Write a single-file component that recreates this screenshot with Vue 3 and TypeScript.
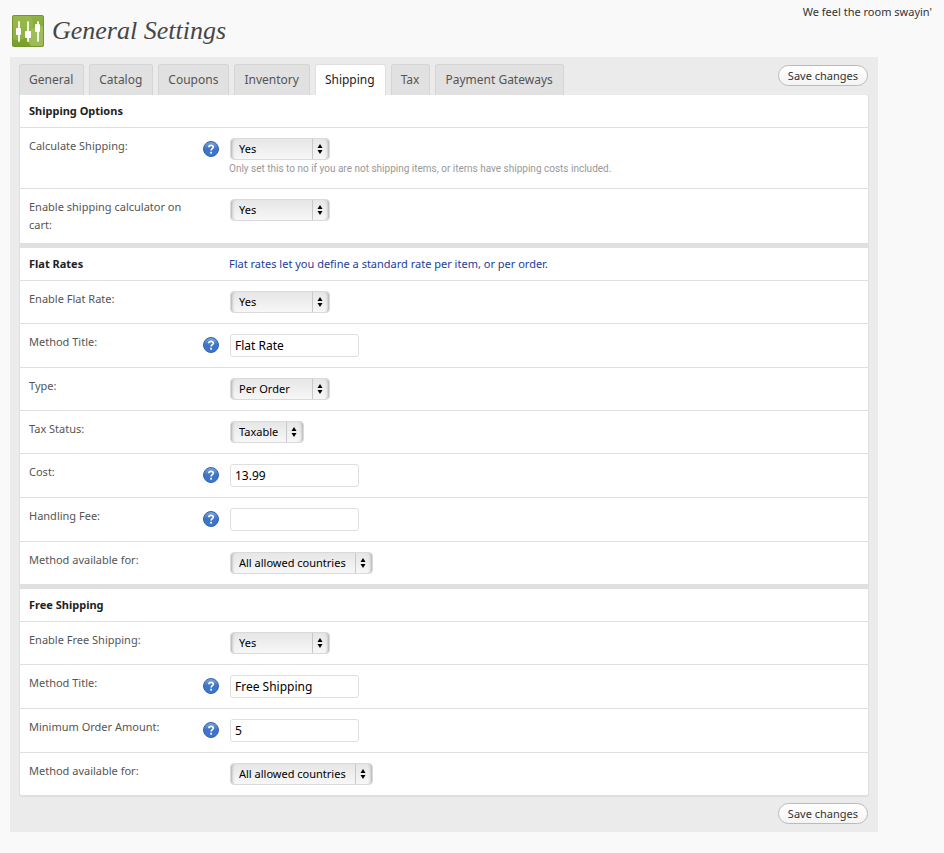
<script setup lang="ts">
import { reactive, ref } from 'vue'

interface Field {
  id: string
  label: string
  kind: 'select' | 'text'
  value: string
  options?: string[]
  size?: 'small' | 'medium' | 'large'
  help?: boolean
  note?: string
}

interface Section {
  title: string
  intro?: string
  fields: Field[]
}

const tabs = ['General', 'Catalog', 'Coupons', 'Inventory', 'Shipping', 'Tax', 'Payment Gateways']
const activeTab = ref('Shipping')

const yesNo = ['Yes', 'No']
const countries = ['All allowed countries', 'Specific countries']

const sections = reactive<Section[]>([
  {
    title: 'Shipping Options',
    fields: [
      {
        id: 'calc-shipping',
        label: 'Calculate Shipping:',
        kind: 'select',
        value: 'Yes',
        options: yesNo,
        size: 'medium',
        help: true,
        note: 'Only set this to no if you are not shipping items, or items have shipping costs included.',
      },
      { id: 'cart-calculator', label: 'Enable shipping calculator on cart:', kind: 'select', value: 'Yes', options: yesNo, size: 'medium' },
    ],
  },
  {
    title: 'Flat Rates',
    intro: 'Flat rates let you define a standard rate per item, or per order.',
    fields: [
      { id: 'flat-enabled', label: 'Enable Flat Rate:', kind: 'select', value: 'Yes', options: yesNo, size: 'medium' },
      { id: 'flat-title', label: 'Method Title:', kind: 'text', value: 'Flat Rate', help: true },
      { id: 'flat-type', label: 'Type:', kind: 'select', value: 'Per Order', options: ['Per Order', 'Per Item'], size: 'medium' },
      { id: 'flat-tax', label: 'Tax Status:', kind: 'select', value: 'Taxable', options: ['Taxable', 'None'], size: 'small' },
      { id: 'flat-cost', label: 'Cost:', kind: 'text', value: '13.99', help: true },
      { id: 'flat-fee', label: 'Handling Fee:', kind: 'text', value: '', help: true },
      { id: 'flat-countries', label: 'Method available for:', kind: 'select', value: 'All allowed countries', options: countries, size: 'large' },
    ],
  },
  {
    title: 'Free Shipping',
    fields: [
      { id: 'free-enabled', label: 'Enable Free Shipping:', kind: 'select', value: 'Yes', options: yesNo, size: 'medium' },
      { id: 'free-title', label: 'Method Title:', kind: 'text', value: 'Free Shipping', help: true },
      { id: 'free-minimum', label: 'Minimum Order Amount:', kind: 'text', value: '5', help: true },
      { id: 'free-countries', label: 'Method available for:', kind: 'select', value: 'All allowed countries', options: countries, size: 'large' },
    ],
  },
])
</script>

<template>
  <div class="page">
    <header class="page-header">
      <div class="heading">
        <svg class="logo" viewBox="0 0 32 32" aria-hidden="true">
          <defs>
            <linearGradient id="logo-fill" x1="0" y1="0" x2="0" y2="1">
              <stop offset="0" stop-color="#8fb242" />
              <stop offset="1" stop-color="#779f28" />
            </linearGradient>
            <clipPath id="logo-clip"><rect width="32" height="32" rx="2" /></clipPath>
          </defs>
          <g clip-path="url(#logo-clip)">
            <rect width="32" height="32" fill="url(#logo-fill)" />
            <circle cx="6" cy="10" r="15" fill="#a3c25c" opacity=".45" />
            <circle cx="28" cy="23" r="12" fill="#b3cd73" opacity=".6" />
          </g>
          <rect x=".5" y=".5" width="31" height="31" rx="2" fill="none" stroke="#75952f" />
          <g fill="#fff">
            <rect x="6" y="6" width="2" height="21" rx="1" opacity=".85" />
            <rect x="15" y="6" width="2" height="21" rx="1" opacity=".85" />
            <rect x="25" y="6" width="2" height="21" rx="1" opacity=".85" />
            <rect x="4" y="13" width="5" height="7" rx="1" />
            <rect x="13" y="16" width="6" height="7" rx="1" />
            <rect x="23" y="9" width="5" height="8" rx="1" />
          </g>
        </svg>
        <h1>General Settings</h1>
      </div>
      <p class="tagline">We feel the room swayin'</p>
    </header>

    <form class="panel" @submit.prevent>
      <div class="toolbar">
        <nav class="tabs">
          <a
            v-for="tab in tabs"
            :key="tab"
            href="#"
            class="tab"
            :class="{ active: tab === activeTab }"
            @click.prevent="activeTab = tab"
          >{{ tab }}</a>
        </nav>
        <button type="submit" class="save">Save changes</button>
      </div>

      <div class="card">
        <section v-for="section in sections" :key="section.title" class="section">
          <div class="row title-row">
            <h2>{{ section.title }}</h2>
            <p v-if="section.intro" class="intro">{{ section.intro }}</p>
          </div>
          <div v-for="field in section.fields" :key="field.id" class="row">
            <label :for="field.id">{{ field.label }}</label>
            <svg v-if="field.help" class="help" viewBox="0 0 16 16" aria-hidden="true">
              <defs>
                <linearGradient :id="field.id + '-help'" x1="0" y1="0" x2="0" y2="1">
                  <stop offset="0" stop-color="#7ea6dc" />
                  <stop offset=".5" stop-color="#3f74c4" />
                  <stop offset="1" stop-color="#3a78d0" />
                </linearGradient>
              </defs>
              <circle cx="8" cy="8" r="7.5" :fill="`url(#${field.id}-help)`" stroke="#3463ad" />
              <path d="M5.8 6.2C5.8 3.7 10.3 3.7 10.3 6.2C10.3 7.7 8.1 7.8 8.1 9.6" fill="none" stroke="#fff" stroke-width="1.6" />
              <rect x="7.2" y="10.8" width="1.8" height="1.8" fill="#fff" />
            </svg>
            <div class="control">
              <div v-if="field.kind === 'select'" class="select" :class="field.size">
                <select :id="field.id" v-model="field.value">
                  <option v-for="option in field.options" :key="option">{{ option }}</option>
                </select>
                <svg class="arrows" viewBox="0 0 16 20" aria-hidden="true">
                  <path d="M0.5 0V20" stroke="#c8c8c8" />
                  <path d="M5.5 9L8 5L10.5 9ZM5.5 11L8 15L10.5 11Z" fill="#000" />
                </svg>
              </div>
              <input v-else :id="field.id" v-model="field.value" type="text" />
              <p v-if="field.note" class="note">{{ field.note }}</p>
            </div>
          </div>
        </section>
      </div>

      <div class="footer">
        <button type="submit" class="save">Save changes</button>
      </div>
    </form>
  </div>
</template>

<style>
body {
  background: #f9f9f9;
}
</style>

<style scoped>
.page {
  font-family: "Noto Sans", "Open Sans", sans-serif;
  font-size: 11px;
  line-height: 18px;
  color: #333;
}
.page * {
  box-sizing: border-box;
}
h1,
h2,
p {
  margin: 0;
}
.page-header {
  display: flex;
  justify-content: space-between;
  padding: 3px 12px 10px;
}
.heading {
  display: flex;
  align-items: center;
  gap: 8px;
  margin-top: 12px;
}
.logo {
  width: 32px;
  height: 32px;
}
h1 {
  font: italic 26px/32px "Liberation Serif", serif;
  color: #464646;
}
.tagline {
  font-size: 11px;
}
.panel {
  margin: 0 66px 20px 10px;
  padding: 7px 9px 8px;
  background: #ebebeb;
}
.toolbar {
  display: flex;
  justify-content: space-between;
  align-items: flex-start;
  padding-right: 1px;
}
.tabs {
  display: flex;
  gap: 5px;
}
.tab {
  height: 31px;
  padding: 0 10px 0 9px;
  border: 1px solid #d5d5d5;
  border-bottom: 0;
  border-radius: 3px 3px 0 0;
  background: #e1e1e1;
  color: #555;
  font-size: 12px;
  line-height: 29px;
  text-decoration: none;
}
.tab.active {
  background: #fff;
  border-color: #dfdfdf;
  color: #222;
}
.save {
  height: 21px;
  margin-top: 1px;
  padding: 0 9px;
  border: 1px solid #bbb;
  border-radius: 11px;
  background: linear-gradient(#fff, #f4f4f4);
  color: #333;
  font: inherit;
  font-size: 11px;
  line-height: 18px;
}
.card {
  border: solid #dfdfdf;
  border-width: 0 1px 2px;
  border-radius: 0 3px 3px 3px;
  background: #fff;
}
.section + .section {
  border-top: 5px solid #e0e0e0;
}
.row {
  display: grid;
  grid-template-columns: 174px 16px 1fr;
  padding: 0 9px;
}
.row + .row {
  border-top: 1px solid #dfdfdf;
}
.title-row {
  padding-top: 7px;
  padding-bottom: 7px;
}
h2 {
  font-size: 11px;
  line-height: 18px;
  color: #222;
}
.intro {
  grid-column: 3;
  padding-left: 10px;
  color: #21409a;
}
label {
  padding: 9px 0;
  color: #555;
}
.help {
  width: 16px;
  height: 16px;
  margin-top: 13px;
}
.control {
  grid-column: 3;
  padding: 10px 0 10px 11px;
}
.select {
  display: grid;
  height: 22px;
}
.select.small {
  width: 74px;
}
.select.medium {
  width: 100px;
}
.select.large {
  width: 143px;
}
select {
  grid-area: 1 / 1;
  appearance: none;
  width: 100%;
  height: 22px;
  padding: 0 20px 0 8px;
  border: 1px solid #dadada;
  border-radius: 4px;
  background: linear-gradient(#e6e6e6, #f7f7f7);
  box-shadow: inset 4px 0 3px -3px #aaa, inset -4px 0 3px -3px #aaa;
  color: #000;
  font: inherit;
  font-size: 11px;
}
.arrows {
  grid-area: 1 / 1;
  place-self: center end;
  width: 16px;
  height: 20px;
  margin-right: 2px;
  pointer-events: none;
}
input {
  display: block;
  width: 129px;
  height: 23px;
  padding: 0 4px;
  border: 1px solid #dfdfdf;
  border-radius: 3px;
  background: #fff;
  color: #000;
  font: inherit;
  font-size: 12px;
}
.note {
  margin-left: -1px;
  color: #999;
  font-family: Roboto, "Noto Sans", sans-serif;
  font-size: 10px;
}
.footer {
  display: flex;
  justify-content: flex-end;
  padding: 5px 1px 0 0;
}
</style>
